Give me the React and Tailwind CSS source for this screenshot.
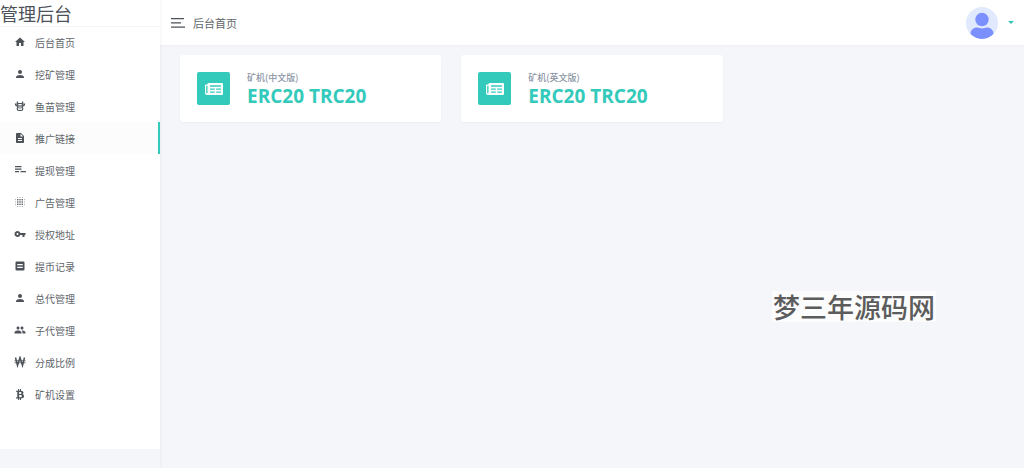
import React from 'react';
import { MdHome, MdPerson, MdDescription, MdVpnKey, MdPeople } from 'react-icons/md';
import { FaBtc } from 'react-icons/fa';

const IconCow = (props) => (
  <svg viewBox="0 0 24 24" width="12" height="12" fill="none" stroke="currentColor" strokeWidth="2.4" {...props}>
    <path d="M7 3c-1 2 0 4 2 4h6c2 0 3-2 2-4" />
    <path d="M8 8H3c0 3 2 4 4 4M16 8h5c0 3-2 4-4 4" />
    <path d="M7.5 8v6M16.5 8v6" />
    <rect x="6.5" y="14" width="11" height="7" rx="3" />
    <path d="M10 10v2M14 10v2M9.5 17.5h1.5M13 17.5h1.5" />
  </svg>
);

const IconLines = (props) => (
  <svg viewBox="0 0 24 24" width="12" height="12" fill="currentColor" {...props}>
    <path d="M2 4h13v2.6H2zM2 9h13v2.6H2zM2 14h8v2.6H2zM13 14h11v2.6H13z" />
  </svg>
);

// 点阵图标，中间的点大，四周的点小
const IconBlur = (props) => (
  <svg viewBox="0 0 24 24" width="12" height="12" fill="currentColor" {...props}>
    {[3, 7.5, 12, 16.5, 21].map((y) =>
      [3, 7.5, 12, 16.5, 21].map((x) => {
        const d = Math.hypot(x - 12, y - 12);
        return d > 12 ? null : <circle key={`${x}-${y}`} cx={x} cy={y} r={d < 7 ? 1.6 : 0.9} />;
      })
    )}
  </svg>
);

const IconNote = (props) => (
  <svg viewBox="0 0 24 24" width="12" height="12" fill="currentColor" fillRule="evenodd" {...props}>
    <path d="M5 3h14a2 2 0 0 1 2 2v14a2 2 0 0 1-2 2H5a2 2 0 0 1-2-2V5a2 2 0 0 1 2-2zM6.5 8v2.500h11V8zM6.500 13.500V16h11v-2.500z" />
  </svg>
);

const IconWon = (props) => (
  <svg viewBox="0 0 24 24" width="12" height="12" fill="none" stroke="currentColor" strokeWidth="3" {...props}>
    <path d="M3 3l4 16 5-16 5 16 4-16" />
    <path d="M1 9.500h22M1 13.500h22" strokeWidth="1.600" />
  </svg>
);

const IconNewspaper = () => (
  <svg viewBox="0 0 18 12" width="18" height="12" fill="currentColor" fillRule="evenodd">
    <path d="M3.500 0H17a1 1 0 0 1 1 1v10a1 1 0 0 1-1 1H2a2 2 0 0 1-2-2V2.500a1 1 0 0 1 1-1h1.500V1a1 1 0 0 1 1-1zM1.200 2.700V10a.7.7 0 0 0 1.300 0V2.700zM5 2.200v1.600h11V2.200zM5 5.500v1.200h4.800V5.500zM11.200 5.500v1.200H16V5.500zM5 8.500v1.200h4.800V8.500zM11.200 8.500v1.200H16V8.500z" />
  </svg>
);

const menu = [
  { label: '后台首页', icon: MdHome },
  { label: '挖矿管理', icon: MdPerson },
  { label: '鱼苗管理', icon: IconCow },
  { label: '推广链接', icon: MdDescription, active: true },
  { label: '提现管理', icon: IconLines },
  { label: '广告管理', icon: IconBlur },
  { label: '授权地址', icon: MdVpnKey },
  { label: '提币记录', icon: IconNote },
  { label: '总代管理', icon: MdPerson },
  { label: '子代管理', icon: MdPeople },
  { label: '分成比例', icon: IconWon },
  { label: '矿机设置', icon: FaBtc },
];

const cards = [
  { title: '矿机(中文版)', value: 'ERC20 TRC20' },
  { title: '矿机(英文版)', value: 'ERC20 TRC20' },
];

function Sidebar() {
  return (
    <aside className="w-40 shrink-0 shadow-[0_0_3px_rgba(0,0,0,0.08)] z-10">
      <div className="bg-white pb-[39px]">
        <h1 className="h-[27px] text-[18px] leading-[26px] border-b border-[#f3f4f5]">管理后台</h1>
        <nav className="-mt-px">
          {menu.map((item) => (
            <a
              key={item.label}
              href="#"
              className={`flex items-center h-8 pl-[14px] gap-[9px] text-[10px] border-r-2 ${
                item.active ? 'bg-[#fcfcfc] border-[#33cabb]' : 'border-transparent'
              }`}
            >
              <item.icon className={`w-3 shrink-0 ${item.icon === FaBtc ? 'h-[11px]' : 'h-3'}`} />
              <span className="leading-4 pt-px text-[#60656b]">{item.label}</span>
            </a>
          ))}
        </nav>
      </div>
    </aside>
  );
}

function Topbar() {
  return (
    <header className="flex items-center justify-between h-[45px] pl-[11px] pr-[10px] bg-white shadow-[0_1px_2px_rgba(0,0,0,0.04)]">
      <div className="flex items-center gap-2">
        <button type="button" aria-label="菜单" className="text-[#4d5259]">
          <svg viewBox="0 0 14 10" width="14" height="10" fill="currentColor">
            <path d="M0 0h13v1.300H0zM0 4.200h10v1.300H0zM0 8.400h14v1.300H0z" />
          </svg>
        </button>
        <span className="text-[11px] leading-4 text-[#60656b]">后台首页</span>
      </div>
      <button type="button" aria-label="用户" className="flex items-center gap-[10px]">
        <svg viewBox="0 0 32 32" width="32" height="32">
          <clipPath id="avatar">
            <circle cx="16" cy="16" r="16" />
          </clipPath>
          <g clipPath="url(#avatar)">
            <rect width="32" height="32" fill="#e0e9fd" />
            <circle cx="16" cy="12.500" r="6.700" fill="#7c8fff" />
            <path d="M4.500 27c0-4 3-6.500 6.500-6.500 2 0 3 1 5 1s3-1 5-1c3.500 0 6.500 2.500 6.500 6.500-3 3.500-7 5-11.500 5S7.500 30.500 4.500 27z" fill="#7c8fff" />
          </g>
        </svg>
        <svg viewBox="0 0 6 3" width="6" height="3" fill="#33cabb">
          <path d="M0 0h6L3 3z" />
        </svg>
      </button>
    </header>
  );
}

export default function App() {
  return (
    <div className="relative flex min-h-screen bg-[#f5f6fa] text-[#4d5259] font-['Noto_Sans_CJK_SC',sans-serif]">
      <Sidebar />
      <div className="flex-1 min-w-0">
        <Topbar />
        <main className="grid grid-cols-3 gap-5 px-5 pt-[10px]">
          {cards.map((card) => (
            <section key={card.title} className="flex items-center gap-[17px] p-[17px] bg-white rounded-[3px] shadow-[0_1px_2px_rgba(0,0,0,0.04)]">
              <div className="flex items-center justify-center w-[33px] h-[33px] shrink-0 rounded-[2px] bg-[#33cabb] text-white">
                <IconNewspaper />
              </div>
              <div className="h-[33px]">
                <p className="text-[9px] leading-[11px] font-medium text-[#8b95a5]">{card.title}</p>
                <p className="text-[19px] leading-[26px] font-bold text-[#33cabb] font-['Open_Sans','Noto_Sans',sans-serif]">{card.value}</p>
              </div>
            </section>
          ))}
        </main>
      </div>

      {/* 水印 */}
      <div className="absolute top-[291px] right-[88px] px-px bg-[#fcfcfc] text-[27px] leading-[31px] font-medium text-[#5c5c5c]">梦三年源码网</div>
    </div>
  );
}
